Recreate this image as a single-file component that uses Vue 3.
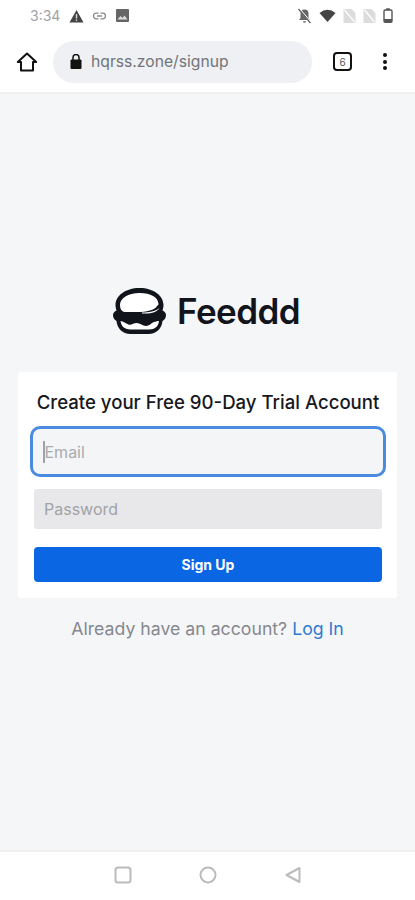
<script setup>
const statusIcons = ['bell', 'wifi', 'sim', 'sim', 'battery']
</script>

<template>
  <div class="phone">
    <div class="status-bar">
      <span class="time">3:34</span>
      <svg class="st-warn" width="15" height="14" viewBox="0 0 15 14"><path d="M7.500 1 14.500 13.500H.5Z" fill="#444"/><rect x="6.800" y="5" width="1.400" height="4.500" fill="#ddd"/><rect x="6.800" y="10.500" width="1.400" height="1.400" fill="#ddd"/></svg>
      <svg class="st-link" width="15" height="8" viewBox="0 0 14 8"><path d="M6 1.200H3.800a2.800 2.800 0 0 0 0 5.600H6M8 1.200h2.200a2.800 2.800 0 0 1 0 5.600H8M4.500 4h5" fill="none" stroke="#888" stroke-width="1.300"/></svg>
      <svg class="st-img" width="13" height="13" viewBox="0 0 13 13"><rect width="13" height="13" rx="1" fill="#666"/><path d="M1.500 10.500 4.500 7l2 2 2-2.500 3 4Z" fill="#ddd"/></svg>
      <div class="status-right">
        <template v-for="(icon, i) in statusIcons" :key="i">
          <svg v-if="icon === 'bell'" width="15" height="16" viewBox="0 0 15 16"><path d="M7.500 1.500a4 4 0 0 1 4 4V10l1.500 2H2l1.500-2V5.500a4 4 0 0 1 4-4ZM6 13.300h3a1.500 1.500 0 0 1-3 0Z" fill="#666"/><path d="M1.500 1 13.500 15" stroke="#666" stroke-width="1.500"/><path d="M3 1 15 15" stroke="#fff" stroke-width="1"/></svg>
          <svg v-else-if="icon === 'wifi'" width="17" height="13" viewBox="0 0 16 13"><path d="M0 4Q8-2.500 16 4L8 13Z" fill="#444"/></svg>
          <svg v-else-if="icon === 'sim'" width="13" height="14" viewBox="0 0 12 14"><path d="M0 0H8L12 4V14H0Z" fill="#dcdcdc"/><path d="M1 1 11 13" stroke="#fff" stroke-width="1.200"/></svg>
          <svg v-else width="10" height="15" viewBox="0 0 10 15"><rect x="1" y="2" width="8" height="12.300" rx="1.200" fill="none" stroke="#555" stroke-width="1.400"/><rect x="3.200" y=".3" width="3.600" height="1.800" fill="#555"/><rect x="1" y="11" width="8" height="3" fill="#555"/></svg>
        </template>
      </div>
    </div>

    <div class="toolbar">
      <svg class="home" width="22" height="22" viewBox="0 0 22 22"><path d="M11 2.500 1.800 11H5v8.500h12V11h3.200Z" fill="none" stroke="#111" stroke-width="2" stroke-linejoin="round"/></svg>
      <div class="url-box">
        <svg width="12" height="15" viewBox="0 0 12 15"><rect x=".5" y="5.500" width="11" height="9.500" rx="1" fill="#111"/><path d="M3 6V3.500a3 3 0 0 1 6 0V6" fill="none" stroke="#111" stroke-width="1.500"/></svg>
        <span class="url">hqrss.zone/signup</span>
      </div>
      <div class="tabs">6</div>
      <div class="menu"><i></i><i></i><i></i></div>
    </div>

    <main class="content">
      <div class="logo">
        <svg width="53" height="47" viewBox="0 0 53 47">
          <!-- dark silhouette of the burger, then the light parts cut in -->
          <path d="M26.500 1C12 1 2.500 9 2.500 18c0 2 .5 4 1 5.500C1.500 24.500 0 26 0 28c0 3 1.500 5 3.500 6 .5 7 6 13 14 13h18c8 0 13.500-6 14-13 2-1 3.500-3 3.500-6 0-2-1.500-3.500-3.500-4.500.5-1.500 1-3.500 1-5.500C50.500 9 41 1 26.500 1Z" fill="#12141c"/>
          <path d="M26.500 6C15 6 7 11 7 18c0 4 1.500 6 4 7h14c8 0 17-2 19-6 1-1 1.500-1 1.500-2C45 10 38 6 26.500 6Z" fill="#fff"/>
          <path d="M29 25.500c7 0 13-1 17.500-4.500-3 4.500-8 6-17.500 5.500Z" fill="#fff"/>
          <path d="M7.500 34c3 .5 5 2.500 8 3.500 3 1 5-1.500 8-1.500 4 0 6 3 9.500 3 3.500 0 5-3 8-4 2-.5 3.500-1 5-1-.5 4-2.500 8.500-10 8.500H17.500c-6.500 0-9.500-4-10-8.500Z" fill="#fff"/>
        </svg>
        <span class="logo-text">Feeddd</span>
      </div>

      <form class="card" @submit.prevent>
        <h1>Create your Free 90-Day Trial Account</h1>
        <div class="email-field"><span class="caret"></span><span>Email</span></div>
        <div class="password-field">Password</div>
        <button type="submit">Sign Up</button>
      </form>

      <p class="login">Already have an account? <a href="#">Log In</a></p>
    </main>

    <nav class="nav-bar">
      <svg width="18" height="18" viewBox="0 0 18 18"><rect x="1.500" y="1.500" width="15" height="15" rx="2.500" fill="none" stroke="#bbb" stroke-width="2"/></svg>
      <svg width="18" height="18" viewBox="0 0 18 18"><circle cx="9" cy="9" r="7.500" fill="none" stroke="#bbb" stroke-width="2"/></svg>
      <svg width="18" height="18" viewBox="0 0 18 18"><path d="M15.500 2v14L2.500 9Z" fill="none" stroke="#bbb" stroke-width="2" stroke-linejoin="round"/></svg>
    </nav>
  </div>
</template>

<style>
body {
  margin: 0;
  background: #f5f6f8;
}
</style>

<style scoped>
.phone {
  width: 415px;
  height: 900px;
  display: flex;
  flex-direction: column;
  font-family: Inter, "Liberation Sans", sans-serif;
  background: #f5f6f8;
  overflow: hidden;
}

.status-bar {
  height: 31px;
  background: #fff;
  display: flex;
  align-items: center;
  padding: 0 22px 0 30px;
  box-sizing: border-box;
}

.time {
  font-size: 14px;
  color: #a3a3a3;
  margin-right: 9px;
}

.st-warn {
  margin-right: 8px;
}

.st-link {
  margin-right: 9px;
}

.status-right {
  margin-left: auto;
  display: flex;
  align-items: center;
  gap: 7px;
}

.toolbar {
  height: 61px;
  background: #fff;
  border-bottom: 2px solid #eeeeef;
  display: flex;
  align-items: center;
  padding: 0 25px 0 16px;
}

.home {
  flex: none;
}

.url-box {
  width: 259px;
  height: 42px;
  margin-left: 15px;
  padding-left: 17px;
  box-sizing: border-box;
  border-radius: 21px;
  background: #eff0f3;
  display: flex;
  align-items: center;
  gap: 9px;
}

.url {
  font-size: 15.700px;
  color: #70747a;
}

.tabs {
  width: 15px;
  height: 15px;
  margin-left: 21px;
  border: 2px solid #111;
  border-radius: 4px;
  font-size: 10px;
  color: #555;
  display: flex;
  align-items: center;
  justify-content: center;
}

.menu {
  margin-left: 31px;
  display: flex;
  flex-direction: column;
  gap: 2.500px;
}

.menu i {
  width: 4px;
  height: 4px;
  border-radius: 50%;
  background: #111;
}

.content {
  flex: 1;
  display: flex;
  flex-direction: column;
  align-items: center;
  padding-top: 193px;
}

.logo {
  display: flex;
  align-items: center;
  gap: 11px;
  height: 47px;
  margin-left: -2px;
}

.logo-text {
  font-size: 35px;
  font-weight: 600;
  color: #12141c;
  letter-spacing: -0.6px;
}

.card {
  width: 379px;
  height: 226px;
  margin-top: 38px;
  padding: 0 15px 0 16px;
  box-sizing: border-box;
  background: #fff;
  border-radius: 3px;
  display: flex;
  flex-direction: column;
}

h1 {
  margin: 19px 0 0;
  height: 22px;
  font-size: 18.600px;
  line-height: 22px;
  font-weight: 500;
  color: #16181d;
  text-align: center;
  white-space: nowrap;
}

.email-field {
  height: 51px;
  margin: 13px -4px 0;
  padding-left: 10px;
  box-sizing: border-box;
  border: 3px solid #4a8be0;
  border-radius: 10px;
  background: #f4f5f7;
  display: flex;
  align-items: center;
  font-size: 16px;
  color: #a9abaf;
}

.caret {
  width: 1.500px;
  height: 22px;
  background: #a0a2a6;
}

.password-field {
  height: 40px;
  margin-top: 12px;
  padding-left: 10px;
  border-radius: 3px;
  background: #e8e8ea;
  font-size: 16px;
  line-height: 40px;
  color: #a0a2a6;
}

button {
  height: 35px;
  margin-top: 18px;
  border: none;
  border-radius: 4px;
  background: #0b66e4;
  color: #fff;
  font-family: inherit;
  font-size: 14px;
  font-weight: 700;
}

.login {
  margin: 20px 0 0;
  font-size: 17.700px;
  line-height: 22px;
  color: #85888d;
}

.login a {
  color: #2f7cd0;
  text-decoration: none;
}

.nav-bar {
  height: 50px;
  flex: none;
  background: #fff;
  border-top: 2px solid #eeeeef;
  box-sizing: border-box;
  display: flex;
  align-items: center;
  justify-content: center;
  gap: 67px;
  padding-bottom: 2px;
}
</style>
